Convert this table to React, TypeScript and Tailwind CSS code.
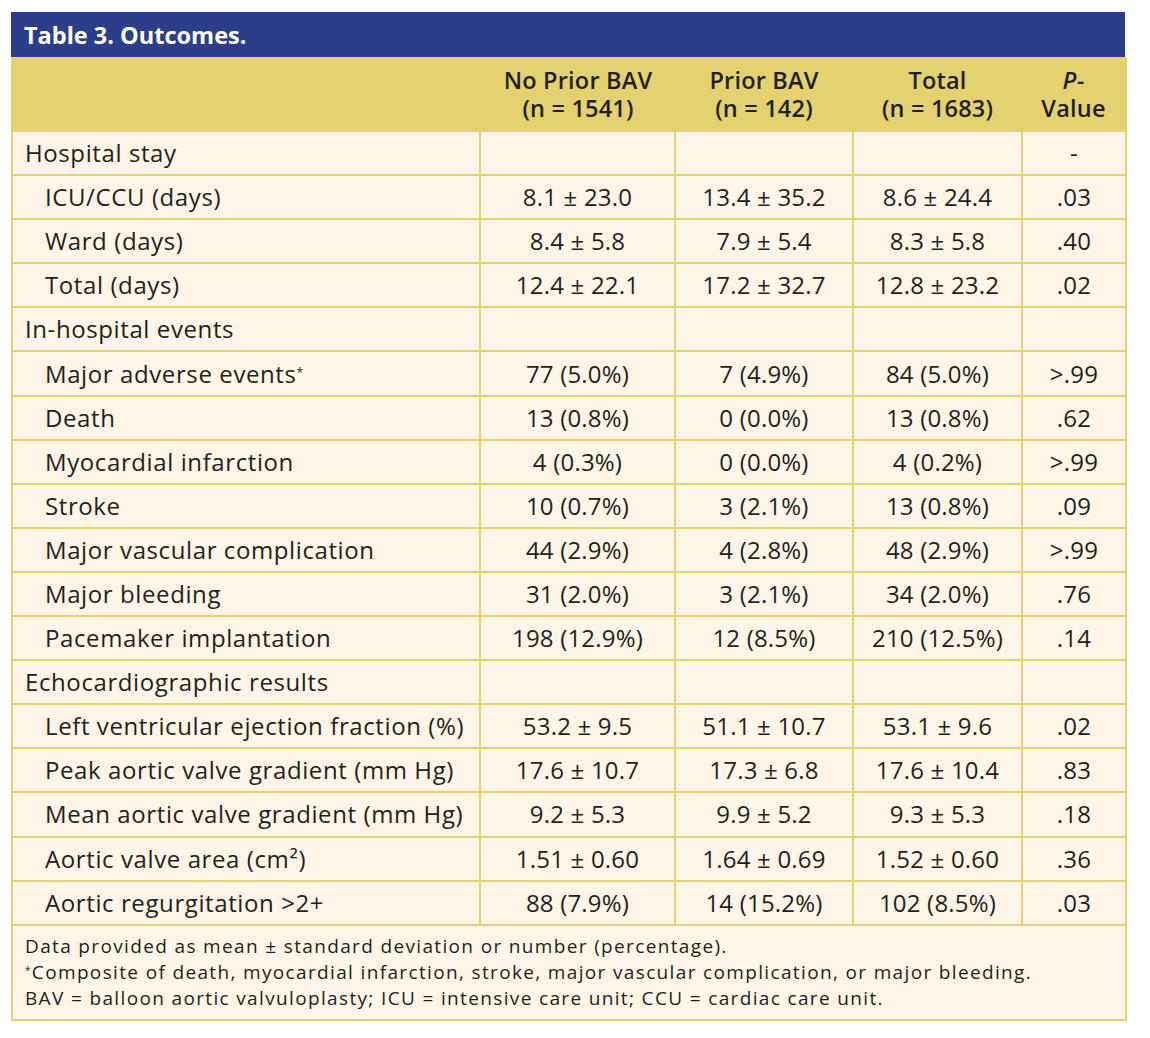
import React from "react";

type Row = { label: string; sup?: string; indent?: boolean; cells: string[] };

const rows: Row[] = [
  { label: "Hospital stay", cells: ["", "", "", "-"] },
  { label: "ICU/CCU (days)", indent: true, cells: ["8.1 ± 23.0", "13.4 ± 35.2", "8.6 ± 24.4", ".03"] },
  { label: "Ward (days)", indent: true, cells: ["8.4 ± 5.8", "7.9 ± 5.4", "8.3 ± 5.8", ".40"] },
  { label: "Total (days)", indent: true, cells: ["12.4 ± 22.1", "17.2 ± 32.7", "12.8 ± 23.2", ".02"] },
  { label: "In-hospital events", cells: ["", "", "", ""] },
  { label: "Major adverse events", sup: "*", indent: true, cells: ["77 (5.0%)", "7 (4.9%)", "84 (5.0%)", ">.99"] },
  { label: "Death", indent: true, cells: ["13 (0.8%)", "0 (0.0%)", "13 (0.8%)", ".62"] },
  { label: "Myocardial infarction", indent: true, cells: ["4 (0.3%)", "0 (0.0%)", "4 (0.2%)", ">.99"] },
  { label: "Stroke", indent: true, cells: ["10 (0.7%)", "3 (2.1%)", "13 (0.8%)", ".09"] },
  { label: "Major vascular complication", indent: true, cells: ["44 (2.9%)", "4 (2.8%)", "48 (2.9%)", ">.99"] },
  { label: "Major bleeding", indent: true, cells: ["31 (2.0%)", "3 (2.1%)", "34 (2.0%)", ".76"] },
  { label: "Pacemaker implantation", indent: true, cells: ["198 (12.9%)", "12 (8.5%)", "210 (12.5%)", ".14"] },
  { label: "Echocardiographic results", cells: ["", "", "", ""] },
  { label: "Left ventricular ejection fraction (%)", indent: true, cells: ["53.2 ± 9.5", "51.1 ± 10.7", "53.1 ± 9.6", ".02"] },
  { label: "Peak aortic valve gradient (mm Hg)", indent: true, cells: ["17.6 ± 10.7", "17.3 ± 6.8", "17.6 ± 10.4", ".83"] },
  { label: "Mean aortic valve gradient (mm Hg)", indent: true, cells: ["9.2 ± 5.3", "9.9 ± 5.2", "9.3 ± 5.3", ".18"] },
  { label: "Aortic valve area (cm²)", indent: true, cells: ["1.51 ± 0.60", "1.64 ± 0.69", "1.52 ± 0.60", ".36"] },
  { label: "Aortic regurgitation >2+", indent: true, cells: ["88 (7.9%)", "14 (15.2%)", "102 (8.5%)", ".03"] },
];

const App = () => {
  return (
    <div className="min-h-[1038px] bg-white pl-[11px] pt-[12px] text-[#231f20] [font-family:'Open_Sans','Noto_Sans',sans-serif]">
      <div className="w-[1114px]">
        <div className="flex h-[45px] items-center bg-[#2c3e8a] px-[13px] pt-[3px] text-[23.5px] font-bold text-white">
          Table 3. Outcomes.
        </div>
        <table className="w-full table-fixed border-collapse text-[24px] tracking-[0.2px]">
          <colgroup>
            <col className="w-[468px]" />
            <col className="w-[195px]" />
            <col className="w-[178px]" />
            <col className="w-[169px]" />
            <col className="w-[104px]" />
          </colgroup>
          <thead>
            <tr className="h-[74px] bg-[#e3d26f] text-[23.5px] leading-[28px]">
              <th className="border-x-2 border-[#e3d26f]" />
              <th className="text-center font-semibold">
                <div>No Prior BAV</div>
                <div>(n = 1541)</div>
              </th>
              <th className="text-center font-semibold">
                <div>Prior BAV</div>
                <div>(n = 142)</div>
              </th>
              <th className="text-center font-semibold">
                <div>Total</div>
                <div>(n = 1683)</div>
              </th>
              <th className="border-r-2 border-[#e3d26f] text-center font-semibold">
                <div>
                  <i>P</i>-
                </div>
                <div>Value</div>
              </th>
            </tr>
          </thead>
          <tbody className="bg-[#fdf6e8]">
            {rows.map((r) => (
              <tr key={r.label} className="h-[44.1px]">
                <td
                  className={
                    "border-2 border-[#e3d26f] tracking-[0.6px] " +
                    (r.indent ? "pl-[32px]" : "pl-[12px]")
                  }
                >
                  {r.label}
                  {r.sup && <sup className="text-[12px]">{r.sup}</sup>}
                </td>
                {r.cells.map((c, i) => (
                  <td key={i} className="border-2 border-[#e3d26f] text-center">
                    {c}
                  </td>
                ))}
              </tr>
            ))}
            <tr>
              <td
                colSpan={5}
                className="border-2 border-[#e3d26f] px-[12px] pt-[7px] pb-[8px] text-[19px] leading-[26px] tracking-[1.35px]"
              >
                Data provided as mean ± standard deviation or number (percentage).
                <br />
                <sup className="text-[10px]">*</sup>Composite of death, myocardial infarction, stroke, major vascular
                complication, or major bleeding.
                <br />
                BAV = balloon aortic valvuloplasty; ICU = intensive care unit; CCU = cardiac care unit.
              </td>
            </tr>
          </tbody>
        </table>
      </div>
    </div>
  );
};

export default App;
